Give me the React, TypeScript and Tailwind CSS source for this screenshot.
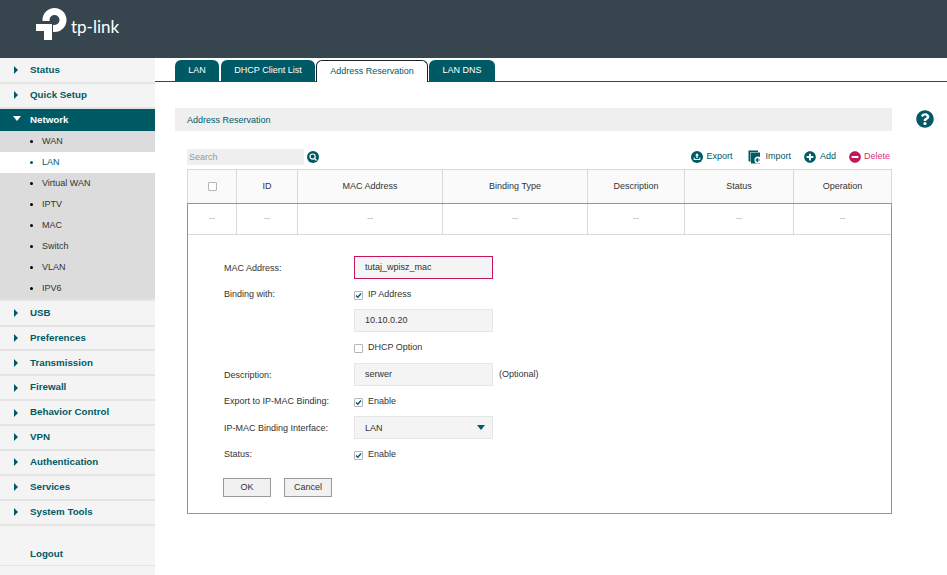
import React from 'react';
import { FaMinusCircle, FaPlusCircle, FaQuestionCircle } from 'react-icons/fa';

const teal = '#005a66';

const Logo = () => (
  <svg width="32" height="33" viewBox="36 8 32 33" className="shrink-0">
    <path d="M46 21 V20 A8.5 8.5 0 1 1 54.5 28.5 H53" fill="none" stroke="#fff" strokeWidth="7" />
    <path d="M36 24 H52 V40 H44 V31 H36 Z" fill="#fff" />
  </svg>
);

const Caret = ({ open }: { open?: boolean }) =>
  open ? (
    <span className="w-0 h-0 border-x-[4px] border-x-transparent border-t-[5px] border-t-white mb-[3px]" />
  ) : (
    <span className="w-0 h-0 border-y-[4px] border-y-transparent border-l-[4px] border-l-[#005a66]" />
  );

const MenuItem = ({ label }: { label: string }) => (
  <div className="h-[24.875px] shrink-0 bg-[#f4f4f4] border-b-2 border-[#e4e4e4] flex items-center pl-[14px] gap-[12px] font-bold text-[9.75px] text-[#005a66]">
    <Caret />
    <span>{label}</span>
  </div>
);

const SubItem = ({ label, active }: { label: string; active?: boolean }) => (
  <div className={`h-[21px] flex items-center pl-[30px] gap-[9px] text-[9px] ${active ? 'bg-white text-[#005a66]' : 'text-[#333]'}`}>
    <span className={`w-[3px] h-[3px] rounded-full ${active ? 'bg-[#005a66]' : 'bg-black'}`} />
    <span>{label}</span>
  </div>
);

const Sidebar = () => (
  <aside className="w-[155px] shrink-0 bg-[#f4f4f4] flex flex-col">
    <div className="h-px shrink-0" />
    <MenuItem label="Status" />
    <MenuItem label="Quick Setup" />
    <div className="h-[22.25px] shrink-0 bg-[#005a66] flex items-center pl-[13px] gap-[9px] font-bold text-[9.75px] text-white">
      <Caret open />
      <span>Network</span>
    </div>
    <div className="shrink-0 mb-[0.625px] bg-[#dcdcdc] border-b-2 border-[#e4e4e4]">
      {['WAN', 'LAN', 'Virtual WAN', 'IPTV', 'MAC', 'Switch', 'VLAN', 'IPV6'].map((s) => (
        <SubItem key={s} label={s} active={s === 'LAN'} />
      ))}
    </div>
    {['USB', 'Preferences', 'Transmission', 'Firewall', 'Behavior Control', 'VPN', 'Authentication', 'Services', 'System Tools'].map((m) => (
      <MenuItem key={m} label={m} />
    ))}
    <div className="h-[40.375px] shrink-0 border-b border-[#e4e4e4] flex items-end pl-[30px] pb-[5px] font-bold text-[9.75px] leading-[13px] text-[#005a66]">
      Logout
    </div>
  </aside>
);

const Tab = ({ label, active, w }: { label: string; active?: boolean; w: string }) => (
  <div
    className={
      active
        ? `${w} h-[22px] -mb-px bg-white border-x border-t border-[#1d2427] rounded-t-[6px] flex items-center justify-center text-[9px] text-[#005a66]`
        : `${w} h-[21px] bg-[#005a66] rounded-t-[6px] flex items-center justify-center text-[9px] text-white`
    }
  >
    {label}
  </div>
);

const Check = ({ on }: { on?: boolean }) => (
  <span className="w-[9px] h-[9px] bg-white border border-[#b5b5b5] rounded-[1px] flex items-center justify-center shrink-0">
    {on && (
      <svg width="7" height="7" viewBox="0 0 7 7">
        <path d="M1 3.5 L2.8 5.2 L6 1.5" fill="none" stroke={teal} strokeWidth="1.4" />
      </svg>
    )}
  </span>
);

const CheckLabel = ({ label }: { label: string }) => (
  <label className="flex items-center gap-[5px]">
    <Check on={label !== 'DHCP Option'} />
    <span>{label}</span>
  </label>
);

const Field = ({ value, error }: { value: string; error?: boolean }) => (
  <div className={`w-[139px] h-[23px] bg-[#f4f4f4] border flex items-center pl-[10px] ${error ? 'pt-[2px] border-[#c2185b]' : 'border-[#e6e6e6]'}`}>
    {value}
  </div>
);

const Row = ({ label, h, mt, labelPt, children }: { label?: string; h: string; mt?: string; labelPt?: string; children: React.ReactNode }) => (
  <div className={`flex items-center ${h} ${mt ?? ''}`}>
    <div className={`w-[130px] shrink-0 ${labelPt ?? ''}`}>{label}</div>
    {children}
  </div>
);

const Toolbar = () => (
  <div className="flex items-center h-[16px] mt-[18px] ml-[12px] mr-[2px]">
    <input
      placeholder="Search"
      className="w-[117px] h-[16px] bg-[#efefef] pl-[2px] text-[9px] text-[#333] placeholder:text-[#999] outline-none"
    />
    <svg width="12" height="12" viewBox="0 0 12 12" className="ml-[3px]">
      <circle cx="6" cy="6" r="6" fill={teal} />
      <circle cx="5.6" cy="5.6" r="2.6" fill="none" stroke="#fff" strokeWidth="1.2" />
      <path d="M7.5 7.5 L9.5 9.5" stroke="#fff" strokeWidth="1.3" />
    </svg>
    <div className="ml-auto flex items-center text-[9px]">
      <svg width="12" height="12" viewBox="0 0 12 12">
        <circle cx="6" cy="6" r="6" fill={teal} />
        <path d="M6 2.2 L8 4.5 H6.7 V7 H5.3 V4.5 H4 Z M2.7 6.5 H3.8 V8 H8.2 V6.5 H9.3 V9 H2.7 Z" fill="#fff" />
      </svg>
      <span className="ml-[3px] text-[#005a66]">Export</span>
      <svg width="14" height="14" viewBox="0 0 14 14" className="ml-[16px]">
        <path d="M0.5 0.5 H10 V2 H2.5 V12 L0.5 11 Z" fill={teal} />
        <path d="M3 2.5 H12 V13.5 H3 Z" fill={teal} />
        <circle cx="10" cy="10" r="3.6" fill="#fff" />
        <path d="M11.8 10 H8.5 M10 8.3 L8.2 10 L10 11.7" fill="none" stroke={teal} strokeWidth="1.2" />
      </svg>
      <span className="ml-[3px] text-[#005a66]">Import</span>
      <FaPlusCircle className="ml-[13px] text-[12px] text-[#005a66]" />
      <span className="ml-[4px] text-[#005a66]">Add</span>
      <FaMinusCircle className="ml-[13px] text-[12px] text-[#c2185b]" />
      <span className="ml-[3px] text-[#d6337a]">Delete</span>
    </div>
  </div>
);

const cols = ['', 'ID', 'MAC Address', 'Binding Type', 'Description', 'Status', 'Operation'];

const Table = () => (
  <div className="ml-[12px] mt-[4px]">
    <div className="grid grid-cols-[49px_61px_145px_145px_97px_109px_98px] h-[34px] bg-[#fafafa] border-l border-t border-[#d8d8d8]">
      {cols.map((c, i) => (
        <div key={i} className="border-r border-[#d8d8d8] flex items-center justify-center text-[9px] text-[#333]">
          {i === 0 ? <Check /> : c}
        </div>
      ))}
    </div>
    <div className="border border-[#7f9ab5] text-[9px] text-[#333]">
      <div className="grid grid-cols-[49px_61px_145px_145px_97px_109px_97px] h-[31px] border-b border-[#d8d8d8]">
        {cols.map((_, i) => (
          <div key={i} className="border-r last:border-r-0 border-[#d8d8d8] flex items-center justify-center text-[#aaa]">
            --
          </div>
        ))}
      </div>
      <form className="pl-[36px] pt-[20px] h-[278px]">
        <Row label="MAC Address:" h="h-[24px]" labelPt="pt-[3px]">
          <Field value="tutaj_wpisz_mac" error />
        </Row>
        <Row label="Binding with:" h="h-[14px]" mt="mt-[9px]">
          <CheckLabel label="IP Address" />
        </Row>
        <Row h="h-[23px]" mt="mt-[7px]">
          <Field value="10.10.0.20" />
        </Row>
        <Row h="h-[14px]" mt="mt-[9px]">
          <CheckLabel label="DHCP Option" />
        </Row>
        <Row label="Description:" h="h-[23px]" mt="mt-[8px]" labelPt="pt-[2px]">
          <Field value="serwer" />
          <span className="ml-[6px]">(Optional)</span>
        </Row>
        <Row label="Export to IP-MAC Binding:" h="h-[14px]" mt="mt-[9px]">
          <CheckLabel label="Enable" />
        </Row>
        <Row label="IP-MAC Binding Interface:" h="h-[23px]" mt="mt-[7px]" labelPt="pt-[2px]">
          <div className="w-[139px] h-[23px] bg-[#f4f4f4] border border-[#e6e6e6] flex items-center justify-between pl-[10px] pr-[7px]">
            <span className="pt-[2px]">LAN</span>
            <span className="w-0 h-0 border-x-[4px] border-x-transparent border-t-[5px] border-t-[#005a66]" />
          </div>
        </Row>
        <Row label="Status:" h="h-[14px]" mt="mt-[9px]">
          <CheckLabel label="Enable" />
        </Row>
        <div className="flex gap-[13px] mt-[16px] -ml-px">
          <button type="button" className="w-[48px] h-[19px] bg-[#f1f1f1] border border-[#9a9a9a] text-[9px] text-[#333]">OK</button>
          <button type="button" className="w-[48px] h-[19px] bg-[#f1f1f1] border border-[#9a9a9a] text-[9px] text-[#333]">Cancel</button>
        </div>
      </form>
    </div>
  </div>
);

export default function App() {
  return (
    <div className="h-screen w-full flex flex-col overflow-hidden bg-white font-['Liberation_Sans',Arial,sans-serif]">
      <header className="h-[58px] shrink-0 bg-[#37464e] flex items-start pl-[36px] pt-[8px]">
        <Logo />
        <span className="ml-[3px] mt-[8px] font-['Lato',sans-serif] text-[17px] leading-[22px] text-white">tp-link</span>
      </header>
      <div className="flex flex-1 min-h-0">
        <Sidebar />
        <main className="flex-1 min-w-0 flex">
          <div className="w-[737px] shrink-0">
            <div className="h-[24px] flex items-end gap-[1px] pl-[20px] border-b border-[#37464e] w-[792px]">
              <Tab label="LAN" w="w-[44px] mr-[1px]" />
              <Tab label="DHCP Client List" w="w-[94px]" />
              <Tab label="Address Reservation" active w="w-[112px]" />
              <Tab label="LAN DNS" w="w-[66px]" />
            </div>
            <div className="ml-[20px] mt-[26px]">
              <div className="h-[23px] bg-[#efefef] pl-[12px] pt-[2px] flex items-center text-[9px] text-[#005a66]">Address Reservation</div>
              <Toolbar />
              <Table />
            </div>
          </div>
          <div className="ml-[24px] pt-[52px]">
            <FaQuestionCircle className="text-[18px] text-[#005a66]" />
          </div>
        </main>
      </div>
    </div>
  );
}
